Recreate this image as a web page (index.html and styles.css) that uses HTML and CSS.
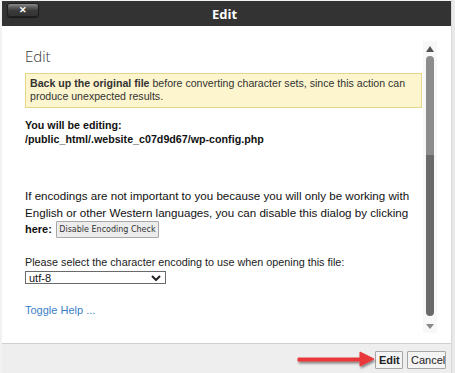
FILE: index.html
```html
<!DOCTYPE html>
<html>
<head>
<meta charset="utf-8">
<link rel="stylesheet" href="styles.css">
</head>
<body>
<div class="page">
  <div class="strip-left"></div>
  <div class="dialog">
    <div class="titlebar">
      <button class="close">&#x2715;</button>
      <div class="title">Edit</div>
    </div>
    <div class="body">
      <div class="content">
        <h2 class="heading">Edit</h2>
        <div class="warning"><b>Back up the original file</b> before converting character sets, since this action can produce unexpected results.</div>
        <p class="editing"><b>You will be editing:<br>/public_html/.website_c07d9d67/wp-config.php</b></p>
        <p class="para">If encodings are not important to you because you will only be working with English or other Western languages, you can disable this dialog by clicking</p>
        <p class="here">here: <button class="disable">Disable Encoding Check</button></p>
        <p class="select-label">Please select the character encoding to use when opening this file:</p>
        <div class="select"><span>utf-8</span><svg class="chev" viewBox="0 0 10 6" width="10" height="6"><path d="M1 1 L5 5 L9 1" fill="none" stroke="#222" stroke-width="2"/></svg></div>
        <a class="toggle">Toggle Help ...</a>
      </div>
      <div class="scrollbar">
        <div class="arrow-up"></div>
        <div class="thumb"><div class="thumb-top"></div><div class="thumb-bottom"></div></div>
        <div class="arrow-down"></div>
      </div>
    </div>
    <div class="footer">
      <svg class="red-arrow" width="90" height="24" viewBox="0 0 90 24">
        <defs><filter id="sh" x="-10%" y="-40%" width="130%" height="200%"><feDropShadow dx="1" dy="2" stdDeviation="1.2" flood-color="#000" flood-opacity="0.45"/></filter></defs>
        <g filter="url(#sh)">
          <path d="M4 10 L66 10 L66 4 L80 11 L66 18 L66 13 L4 13 Z" fill="#e8393a" stroke="#e8393a" stroke-width="1" stroke-linejoin="round"/>
        </g>
      </svg>
      <button class="btn edit">Edit</button>
      <button class="btn cancel">Cancel</button>
    </div>
  </div>
  <div class="strip-right"></div>
</div>
</body>
</html>
```
FILE: styles.css
```css
html, body {
  margin: 0;
  padding: 0;
}
body {
  width: 455px;
  height: 373px;
  overflow: hidden;
  font-family: Arial, "Liberation Sans", sans-serif;
  background: #f3f3f3;
}
.page {
  display: flex;
  height: 373px;
}
.strip-left {
  width: 2px;
  background: #f2f2f2;
}
.strip-right {
  width: 4px;
  background: #e9e9e9;
  border-left: 1px solid #d8d8d8;
  box-sizing: border-box;
}
.dialog {
  width: 449px;
  display: flex;
  flex-direction: column;
  background: #fff;
  margin-top: 1px;
}
.titlebar {
  height: 25px;
  background: #333333;
  position: relative;
  display: flex;
  align-items: center;
  justify-content: center;
}
.close {
  position: absolute;
  left: 5px;
  top: 2px;
  width: 32px;
  height: 14px;
  border: 1px solid #1e1e1e;
  border-radius: 3px;
  background: linear-gradient(#8a8a8a 0%, #5a5a5a 30%, #3a3a3a 55%, #333 100%);
  color: #fff;
  font-size: 9px;
  font-weight: bold;
  line-height: 12px;
  padding: 0;
  box-shadow: 0 1px 1px rgba(0,0,0,0.5);
}
.title {
  color: #fff;
  font-family: "Open Sans", Arial, sans-serif;
  font-weight: 700;
  font-size: 13px;
  margin-right: 4px;
}
.body {
  display: flex;
  flex: 1;
  min-height: 0;
}
.content {
  width: 397px;
  padding-left: 23px;
  font-size: 11px;
  color: #222;
}
.heading {
  font-family: "Open Sans", Arial, sans-serif;
  font-weight: 300;
  font-size: 15px;
  color: #333;
  margin: 19px 0 0 0;
  line-height: 22px;
}
.warning {
  margin-top: 6px;
  background: #fcf5cd;
  border: 1px solid #e3d68a;
  padding: 3px 4px 4px 4px;
  line-height: 13px;
  color: #333;
  font-size: 10.6px;
}
.editing {
  margin: 10px 0 0 0;
  line-height: 14px;
  color: #111;
  font-size: 10.7px;
}
.para {
  margin: 41px 0 0 0;
  line-height: 17px;
  color: #111;
  font-size: 11.6px;
}
.here {
  margin: 0;
  line-height: 17px;
  color: #111;
  font-weight: bold;
  font-size: 11px;
  display: flex;
  align-items: flex-start;
}
.disable {
  margin: 0 0 0 4px;
  height: 17px;
  width: 103px;
  padding: 0;
  font-family: "DejaVu Sans", sans-serif;
  font-size: 8px;
  font-weight: normal;
  color: #333;
  background: #ececec;
  border: 1px solid #a8a8a8;
  border-radius: 1px;
}
.select-label {
  margin: 18px 0 0 0;
  line-height: 13px;
  color: #222;
  font-size: 10.8px;
}
.select {
  margin-top: 2px;
  width: 141px;
  height: 13px;
  box-sizing: border-box;
  border: 1px solid #6a6a6a;
  display: flex;
  align-items: center;
  justify-content: space-between;
  padding: 0 4px 0 3px;
  font-size: 11px;
  color: #111;
}
.chev {
  display: block;
}
.toggle {
  display: block;
  margin-top: 20px;
  color: #3a80c8;
  font-size: 11px;
  line-height: 13px;
}
.scrollbar {
  width: 14px;
  margin-left: 1px;
  margin-top: 15px;
  margin-bottom: 10px;
  background: #f8f8f8;
  display: flex;
  flex-direction: column;
  align-items: center;
}
.arrow-up {
  margin-top: 5px;
  width: 0;
  height: 0;
  border-left: 4px solid transparent;
  border-right: 4px solid transparent;
  border-bottom: 6px solid #555;
}
.thumb {
  margin-top: 4px;
  width: 8px;
  flex: 1;
  border-radius: 4px;
  overflow: hidden;
  display: flex;
  flex-direction: column;
}
.thumb-top {
  height: 99px;
  background: #8c8c8c;
}
.thumb-bottom {
  flex: 1;
  background: #6a6a6a;
}
.arrow-down {
  margin-top: 8px;
  margin-bottom: 4px;
  width: 0;
  height: 0;
  border-left: 4px solid transparent;
  border-right: 4px solid transparent;
  border-top: 5px solid #888;
}
.footer {
  background: #eeeeee;
  border-top: 1px solid #cfcfcf;
  display: flex;
  align-items: flex-start;
  justify-content: flex-end;
  padding: 7px 5px 0 0;
  box-sizing: border-box;
  height: 30px;
  position: relative;
}
.red-arrow {
  position: absolute;
  left: 292px;
  top: 4px;
}
.btn {
  height: 18px;
  padding: 0 3px;
  font-family: Arial, "Liberation Sans", sans-serif;
  font-size: 11px;
  color: #222;
  background: #f4f4f4;
  border: 1px solid #a6a6a6;
  border-radius: 1px;
  margin-left: 4px;
}
.edit {
  font-weight: bold;
  width: 28px;
}
.cancel {
  width: 39px;
}
```
